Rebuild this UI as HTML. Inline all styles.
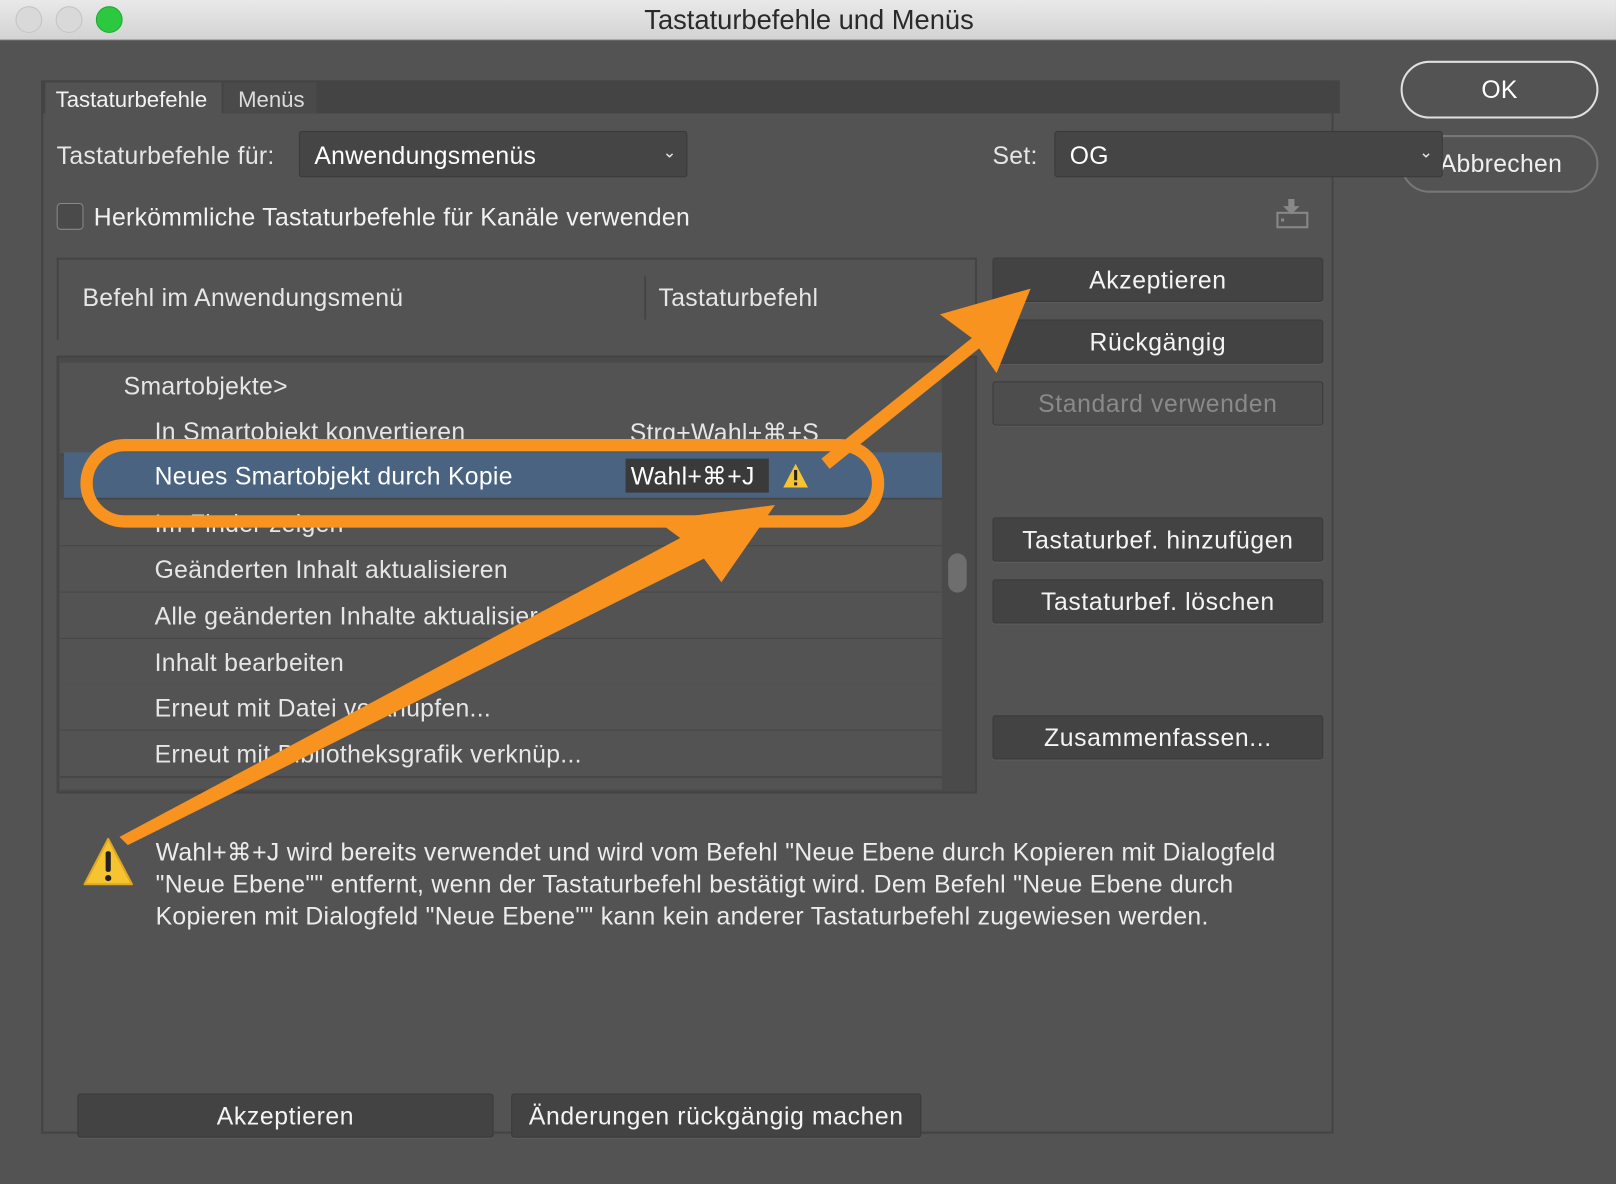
<!DOCTYPE html>
<html><head><meta charset="utf-8"><style>
html,body{margin:0;padding:0;width:1616px;height:1184px;overflow:hidden;background:#535353}
#s{position:absolute;left:0;top:0;width:1568px;height:1149px;transform:scale(1.0306);transform-origin:0 0;font-family:"Liberation Sans",sans-serif;color:#e6e6e6;background:#535353}
.a{position:absolute}
.t{position:absolute;font-size:24px;letter-spacing:0.3px;white-space:nowrap;line-height:26px;margin-top:2px}
.btn{position:absolute;background:#434343;border:1px solid #3a3a3a;box-shadow:0 1px 0 #5c5c5c;border-radius:3px;font-size:24px;letter-spacing:0.6px;text-align:center;color:#f4f4f4}
.row{position:absolute;left:58px;width:856px;height:44px;border-bottom:2px solid #474747;background:#535353}
.row span{position:absolute;left:92px;top:10px;font-size:24px;letter-spacing:0.3px;white-space:nowrap}
</style></head><body><div id="s">
<div class="a" style="left:0;top:0;width:1568px;height:38px;background:linear-gradient(#e9e9e9,#d3d3d3);border-bottom:1px solid #b5b5b5"></div>
<div class="a" style="left:15px;top:6px;width:24px;height:24px;border-radius:50%;background:#d9d9d9;border:1px solid #c4c4c4"></div>
<div class="a" style="left:54px;top:6px;width:24px;height:24px;border-radius:50%;background:#d9d9d9;border:1px solid #c4c4c4"></div>
<div class="a" style="left:93px;top:6px;width:24px;height:24px;border-radius:50%;background:#2bc840;border:1px solid #22a834"></div>
<div class="t" style="left:0;width:1570px;text-align:center;top:4px;font-size:26.5px;letter-spacing:0;color:#2a2a2a">Tastaturbefehle und Menüs</div>

<div class="a" style="left:40px;top:78px;width:1250px;height:1018px;border:2px solid #444"></div>
<div class="a" style="left:40px;top:78px;width:1260px;height:32px;background:#444"></div>
<div class="a" style="left:44px;top:80px;width:171px;height:32px;background:#535353"></div>
<div class="t" style="left:54px;top:82px;font-size:21.5px;letter-spacing:0;color:#f2f2f2">Tastaturbefehle</div>
<div class="a" style="left:217px;top:80px;width:90px;height:30px;background:#4a4a4a"></div>
<div class="t" style="left:231px;top:82px;font-size:21.5px;letter-spacing:0;color:#dcdcdc">Menüs</div>

<div class="t" style="left:55px;top:137px">Tastaturbefehle für:</div>
<div class="a" style="left:290px;top:127px;width:375px;height:43px;background:#454545;border:1px solid #3a3a3a;border-radius:3px"></div>
<div class="t" style="left:305px;top:137px;color:#fff">Anwendungsmenüs</div>
<div class="t" style="left:643px;top:134px;font-size:16px">&#8964;</div>

<div class="t" style="left:963px;top:137px">Set:</div>
<div class="a" style="left:1023px;top:127px;width:375px;height:43px;background:#454545;border:1px solid #3a3a3a;border-radius:3px;z-index:2"></div>
<div class="t" style="left:1038px;top:137px;color:#fff;z-index:3">OG</div>
<div class="t" style="left:1377px;top:134px;font-size:16px;z-index:3">&#8964;</div>

<div class="a" style="left:1359px;top:59px;width:188px;height:52px;border:2px solid #e0e0e0;border-radius:28px"></div>
<div class="t" style="left:1359px;width:192px;text-align:center;top:73px;font-size:24px;color:#fff">OK</div>
<div class="a" style="left:1359px;top:131px;width:188px;height:52px;border:2px solid #777;border-radius:28px"></div>
<div class="t" style="left:1397px;top:145px;font-size:24px;color:#f0f0f0">Abbrechen</div>

<div class="a" style="left:55px;top:197px;width:24px;height:24px;border:1px solid #888;border-radius:4px;background:#4a4a4a"></div>
<div class="t" style="left:91px;top:197px;color:#f2f2f2">Herkömmliche Tastaturbefehle für Kanäle verwenden</div>
<svg class="a" style="left:1236px;top:193px" width="36" height="32"><path d="M14 0h6v7h5l-8 8-8-8h5z" fill="#888"/><rect x="3.5" y="13.5" width="29" height="14" fill="none" stroke="#888" stroke-width="2"/><rect x="7" y="19" width="3" height="3" fill="#888"/></svg>

<div class="a" style="left:55px;top:250px;width:889px;height:78px;border:2px solid #444;border-bottom:none;background:#535353"></div>
<div class="t" style="left:80px;top:275px">Befehl im Anwendungsmenü</div>
<div class="a" style="left:625px;top:268px;width:2px;height:42px;background:#444"></div>
<div class="t" style="left:639px;top:275px">Tastaturbefehl</div>

<div class="a" style="left:55px;top:345px;width:889px;height:421px;border:2px solid #444;background:#4a4a4a"></div>
<div class="row" style="top:352px"><span style="left:62px">Smartobjekte&gt;</span></div>
<div class="row" style="top:396px"><span>In Smartobjekt konvertieren</span><span style="left:553px">Strg+Wahl+⌘+S</span></div>
<div class="row" style="top:439px;background:#4a6381;left:62px;width:852px"><span style="left:88px;color:#fff">Neues Smartobjekt durch Kopie</span></div>
<div class="a" style="left:607px;top:445px;width:139px;height:33px;background:#3a3a3a"></div>
<div class="t" style="left:612px;top:448px;color:#fff">Wahl+⌘+J</div>
<svg class="a" style="left:759px;top:449px" width="26" height="25"><path d="M13 1L25 24H1z" fill="#f5c430"/><rect x="11.5" y="7" width="3" height="10" fill="#222"/><rect x="11.5" y="19" width="3" height="3" fill="#222"/></svg>
<div class="row" style="top:485px"><span>Im Finder zeigen</span></div>
<div class="row" style="top:530px"><span>Geänderten Inhalt aktualisieren</span></div>
<div class="row" style="top:575px"><span>Alle geänderten Inhalte aktualisieren</span></div>
<div class="row" style="top:620px"><span>Inhalt bearbeiten</span></div>
<div class="row" style="top:664px"><span>Erneut mit Datei verknüpfen...</span></div>
<div class="row" style="top:709px"><span>Erneut mit Bibliotheksgrafik verknüp...</span></div>
<div class="a" style="left:58px;top:755px;width:856px;height:11px;background:#535353"></div>
<div class="a" style="left:920px;top:537px;width:18px;height:38px;border-radius:9px;background:#6e6e6e"></div>

<div class="btn" style="left:963px;top:250px;width:319px;height:41px;line-height:43px">Akzeptieren</div>
<div class="btn" style="left:963px;top:310px;width:319px;height:41px;line-height:43px">Rückgängig</div>
<div class="btn" style="left:963px;top:370px;width:319px;height:41px;line-height:43px;background:#4d4d4d;color:#8a8a8a">Standard verwenden</div>
<div class="btn" style="left:963px;top:502px;width:319px;height:41px;line-height:43px">Tastaturbef. hinzufügen</div>
<div class="btn" style="left:963px;top:562px;width:319px;height:41px;line-height:43px">Tastaturbef. löschen</div>
<div class="btn" style="left:963px;top:694px;width:319px;height:41px;line-height:43px">Zusammenfassen...</div>

<svg class="a" style="left:80px;top:812px" width="50" height="48"><path d="M25 2L48 46H2z" fill="#f5c430" stroke="#e0a820" stroke-width="2" stroke-linejoin="round"/><rect x="22.5" y="14" width="5" height="20" rx="2" fill="#222"/><circle cx="25" cy="40" r="3" fill="#222"/></svg>
<div class="t" style="left:151px;top:810px;line-height:31px;color:#ececec">Wahl+⌘+J wird bereits verwendet und wird vom Befehl "Neue Ebene durch Kopieren mit Dialogfeld<br>"Neue Ebene"" entfernt, wenn der Tastaturbefehl bestätigt wird. Dem Befehl "Neue Ebene durch<br>Kopieren mit Dialogfeld "Neue Ebene"" kann kein anderer Tastaturbefehl zugewiesen werden.</div>

<div class="btn" style="left:75px;top:1061px;width:402px;height:41px;line-height:43px">Akzeptieren</div>
<div class="btn" style="left:496px;top:1061px;width:396px;height:41px;line-height:43px">Änderungen rückgängig machen</div>

<svg class="a" style="left:0;top:0;z-index:10" width="1568" height="1149">
<rect x="84" y="432" width="768" height="74" rx="37" fill="none" stroke="#f7931e" stroke-width="12"/>
<path d="M797 445L943 328L912 305L1000 280L967 362L950 338L805 455Z" fill="#f7931e"/>
<path d="M116 812L660 522L637 505L752 490L700 565L683 542L124 820Z" fill="#f7931e"/>
</svg>
</div></body></html>
